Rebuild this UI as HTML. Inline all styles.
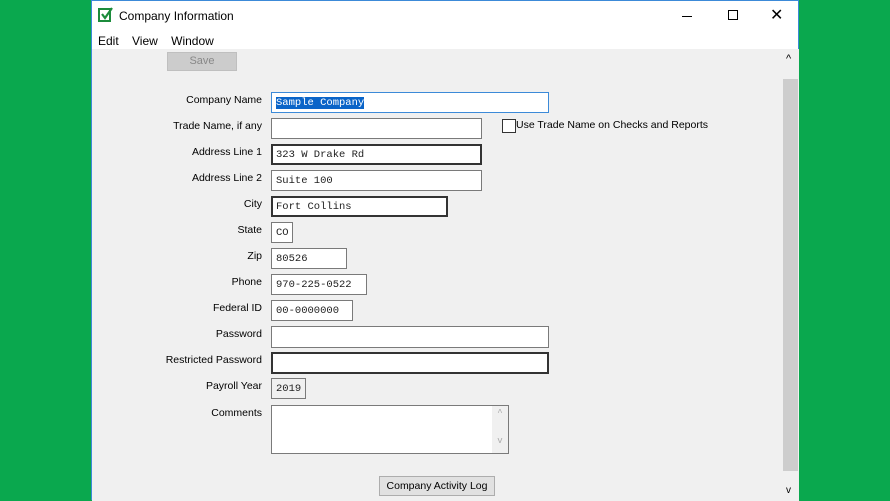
<html><head><style>
body{margin:0;width:890px;height:500px;background:#0aa84e;position:relative;overflow:hidden;font-family:"Liberation Sans",sans-serif;}
.win{position:absolute;left:91px;top:0;width:708px;height:500px;background:#fff;border-left:1px solid #3c8ad8;border-right:1px solid #3c8ad8;border-top:1px solid #3c8ad8;box-sizing:border-box}
.c{position:absolute;left:0;top:48px;width:690px;height:452px;background:#f0f0f0}
.sb{position:absolute;left:690px;top:48px;width:17px;height:452px;background:#f0f0f0}
.abs{position:absolute}
.lbl{position:absolute;font-size:10.5px;color:#000;right:520px;text-align:right;white-space:nowrap}
.in{position:absolute;left:179px;height:21px;background:#fff;border:1px solid #7a7a7a;box-sizing:border-box;font-family:"Liberation Mono",monospace;font-size:10.5px;padding:4px 0 0 4px;color:#222;white-space:pre}
.dk{border:2px solid #333;padding:3px 0 0 3px}
</style></head><body>
<div class="win">
<svg class="abs" style="left:6px;top:6px" width="16" height="16"><rect x="1" y="2" width="11" height="12" fill="none" stroke="#1c8c3c" stroke-width="2"/><path d="M4 7l3 4 7-10" stroke="#1c8c3c" stroke-width="2.2" fill="none"/></svg>
<div class="abs" style="left:27px;top:8px;font-size:12px">Company Information</div>
<div class="abs" style="left:590px;top:15px;width:10px;height:1px;background:#000"></div>
<div class="abs" style="left:636px;top:9px;width:8px;height:8px;border:1px solid #000"></div>
<div class="abs" style="left:678px;top:4px;font-size:16px;font-weight:300">✕</div>
<div class="abs" style="left:6px;top:33px;font-size:12px">Edit&nbsp;&nbsp;&nbsp;&nbsp;View&nbsp;&nbsp;&nbsp;&nbsp;Window</div>
<div class="c">
<div class="abs" style="left:75px;top:3px;width:70px;height:19px;background:#ccc;border:1px solid #bfbfbf;box-sizing:border-box;font-size:11px;color:#888;text-align:center;line-height:17px">Save</div>
<div class="lbl" style="top:45px">Company Name</div>
<div class="in" style="top:43px;width:278px;border-color:#3c8ad8"><span style="background:#0a64c8;color:#fff">Sample Company</span></div>
<div class="lbl" style="top:71px">Trade Name, if any</div>
<div class="in" style="top:69px;width:211px"></div>
<div class="abs" style="left:410px;top:70px;width:12px;height:12px;border:1px solid #333;background:#fff"></div>
<div class="abs" style="left:424px;top:70px;font-size:10.5px">Use Trade Name on Checks and Reports</div>
<div class="lbl" style="top:97px">Address Line 1</div>
<div class="in dk" style="top:95px;width:211px">323 W Drake Rd</div>
<div class="lbl" style="top:123px">Address Line 2</div>
<div class="in" style="top:121px;width:211px">Suite 100</div>
<div class="lbl" style="top:149px">City</div>
<div class="in dk" style="top:147px;width:177px">Fort Collins</div>
<div class="lbl" style="top:175px">State</div>
<div class="in" style="top:173px;width:22px">CO</div>
<div class="lbl" style="top:201px">Zip</div>
<div class="in" style="top:199px;width:76px">80526</div>
<div class="lbl" style="top:227px">Phone</div>
<div class="in" style="top:225px;width:96px">970-225-0522</div>
<div class="lbl" style="top:253px">Federal ID</div>
<div class="in" style="top:251px;width:82px">00-0000000</div>
<div class="lbl" style="top:279px">Password</div>
<div class="in" style="top:277px;width:278px;height:22px"></div>
<div class="lbl" style="top:305px">Restricted Password</div>
<div class="in dk" style="top:303px;width:278px;height:22px"></div>
<div class="lbl" style="top:331px">Payroll Year</div>
<div class="in" style="top:329px;width:35px;background:#f0f0f0">2019</div>
<div class="lbl" style="top:358px">Comments</div>
<div class="in" style="top:356px;width:238px;height:49px"><div class="abs" style="right:0;top:0;width:16px;height:47px;background:#f0f0f0;color:#aaa;font-size:9px;text-align:center;line-height:14px">^<br><br>v</div></div>
<div class="abs" style="left:287px;top:427px;width:116px;height:20px;background:#e1e1e1;border:1px solid #adadad;box-sizing:border-box;font-size:10.5px;text-align:center;line-height:18px">Company Activity Log</div>
</div>
<div class="sb"><div class="abs" style="left:4px;top:4px;font-size:11px">^</div>
<div class="abs" style="left:1px;top:30px;width:15px;height:392px;background:#cdcdcd"></div>
<div class="abs" style="left:4px;top:436px;font-size:10px">v</div></div>
</div>
</body></html>
